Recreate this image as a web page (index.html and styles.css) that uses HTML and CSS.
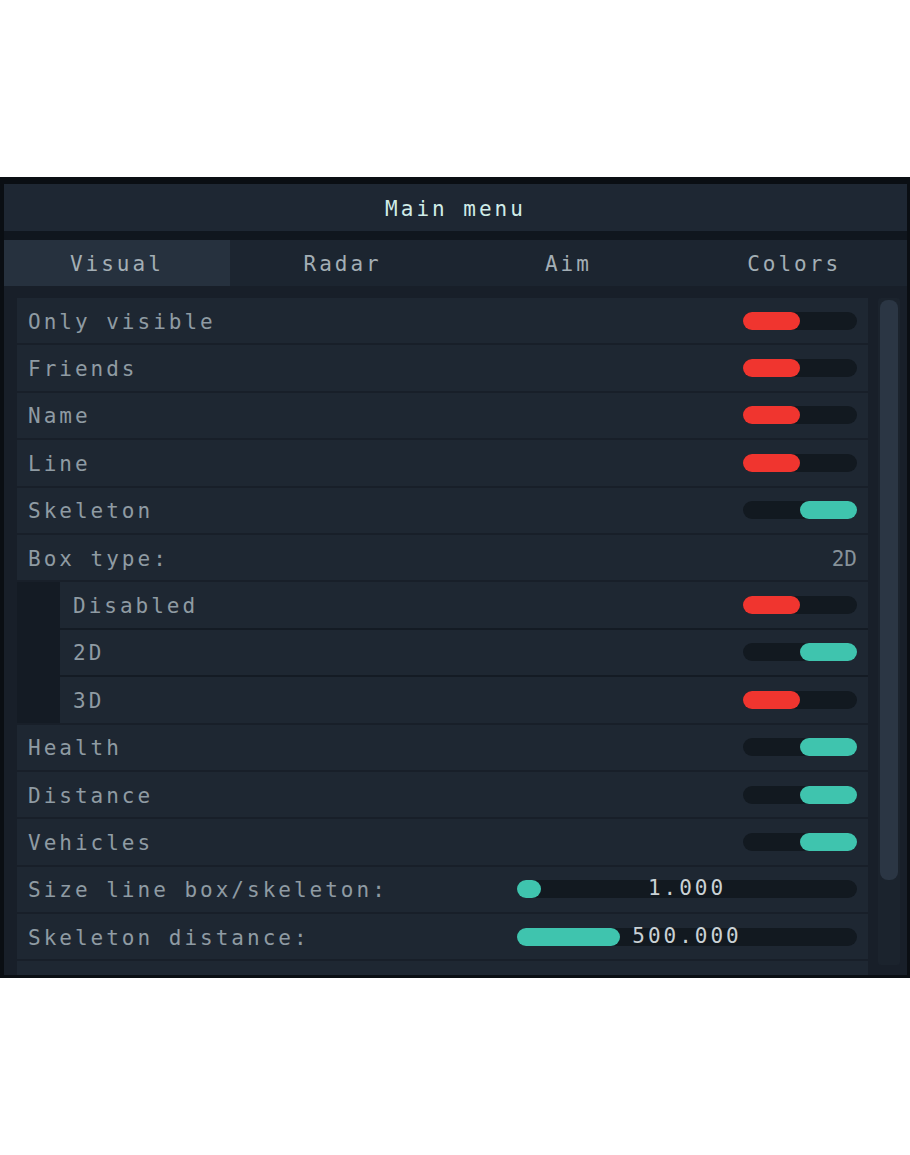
FILE: index.html
```html
<!DOCTYPE html>
<html>
<head>
    <title>Main menu</title>
    <link rel="stylesheet" href="styles.css">
</head>
<body>
    <div class="window">
        <div class="title">Main menu</div>
        <div class="tabs">
            <div class="tab active">Visual</div>
            <div class="tab">Radar</div>
            <div class="tab">Aim</div>
            <div class="tab">Colors</div>
        </div>
        <div class="content">
            <div class="list">
                <div class="row"><span class="label">Only visible</span><div class="toggle off"><span></span></div></div>
                <div class="row"><span class="label">Friends</span><div class="toggle off"><span></span></div></div>
                <div class="row"><span class="label">Name</span><div class="toggle off"><span></span></div></div>
                <div class="row"><span class="label">Line</span><div class="toggle off"><span></span></div></div>
                <div class="row"><span class="label">Skeleton</span><div class="toggle on"><span></span></div></div>
                <div class="row"><span class="label">Box type:</span><span class="value">2D</span></div>
                <div class="group">
                    <div class="row sub"><span class="label">Disabled</span><div class="toggle off"><span></span></div></div>
                    <div class="row sub"><span class="label">2D</span><div class="toggle on"><span></span></div></div>
                    <div class="row sub"><span class="label">3D</span><div class="toggle off"><span></span></div></div>
                </div>
                <div class="row"><span class="label">Health</span><div class="toggle on"><span></span></div></div>
                <div class="row"><span class="label">Distance</span><div class="toggle on"><span></span></div></div>
                <div class="row"><span class="label">Vehicles</span><div class="toggle on"><span></span></div></div>
                <div class="row">
                    <span class="label">Size line box/skeleton:</span>
                    <div class="slider"><span class="fill knob"></span><span class="num">1.000</span></div>
                </div>
                <div class="row">
                    <span class="label">Skeleton distance:</span>
                    <div class="slider"><span class="fill" style="width: 103px"></span><span class="num">500.000</span></div>
                </div>
                <div class="row"></div>
            </div>
            <div class="scrollbar"><div class="thumb"></div></div>
        </div>
    </div>
</body>
</html>
```

FILE: styles.css
```css
body {
    margin: 0;
    padding: 0;
    background-color: #fff;
    font-family: "DejaVu Sans Mono", "Liberation Mono", monospace;
    font-size: 21px;
    letter-spacing: 3px;
}
.window {
    margin-top: 177px;
    width: 903px;
    height: 791px;
    background-color: #181f29;
    border: solid #0a0e13;
    border-width: 7px 3px 3px 4px;
    display: flex;
    flex-direction: column;
    overflow: hidden;
}
.title {
    height: 56px;
    flex-shrink: 0;
    background-color: #1e2733;
    color: #d0ece8;
    display: flex;
    align-items: center;
    justify-content: center;
    padding-top: 3px;
    box-sizing: border-box;
    border-bottom: 9px solid #10161e;
}
.tabs {
    height: 46px;
    flex-shrink: 0;
    display: grid;
    grid-template-columns: repeat(4, 1fr);
    background-color: #1c2530;
    color: #a3aeb5;
}
.tab {
    display: flex;
    align-items: center;
    justify-content: center;
    padding-top: 2px;
}
.tab.active {
    background-color: #26313e;
}
.content {
    flex-grow: 1;
    display: flex;
    gap: 10px;
    padding: 12px 6px 0 13px;
    overflow: hidden;
}
.list {
    width: 851px;
    display: flex;
    flex-direction: column;
    gap: 2px;
    flex-shrink: 0;
}
.row {
    height: 45.4px;
    flex-shrink: 0;
    background-color: #1e2732;
    display: flex;
    align-items: center;
    padding: 2px 11px 0 11px;
    box-sizing: border-box;
    color: #8f9ba3;
}
.label {
    flex-grow: 1;
    white-space: nowrap;
}
.value {
    letter-spacing: 0;
    color: #87929a;
}
.group {
    display: flex;
    flex-direction: column;
    gap: 2px;
    padding-left: 43px;
    background-color: #141b24;
}
.row.sub {
    padding-left: 13px;
}
.toggle {
    width: 114px;
    height: 18px;
    border-radius: 9px;
    background-color: #121920;
    display: flex;
    margin-top: -2px;
}
.toggle span {
    width: 57px;
    height: 18px;
    border-radius: 9px;
}
.toggle.off span {
    background-color: #f0352f;
}
.toggle.on {
    justify-content: flex-end;
}
.toggle.on span {
    background-color: #3fc4ae;
}
.slider {
    position: relative;
    width: 340px;
    height: 18px;
    border-radius: 9px;
    background-color: #121920;
    margin-top: -2px;
}
.slider .fill {
    display: block;
    height: 18px;
    border-radius: 9px;
    background-color: #3fc4ae;
}
.slider .knob {
    width: 24px;
}
.slider .num {
    position: absolute;
    left: 0;
    right: 0;
    top: -4px;
    text-align: center;
    color: #c9d1d5;
    letter-spacing: 3px;
}
.scrollbar {
    width: 22px;
    height: 667px;
    flex-shrink: 0;
    background-color: #1b232d;
    border-radius: 3px;
    padding: 2px;
    box-sizing: border-box;
}
.thumb {
    height: 580px;
    border-radius: 8px;
    background-color: #2b3644;
}
```
